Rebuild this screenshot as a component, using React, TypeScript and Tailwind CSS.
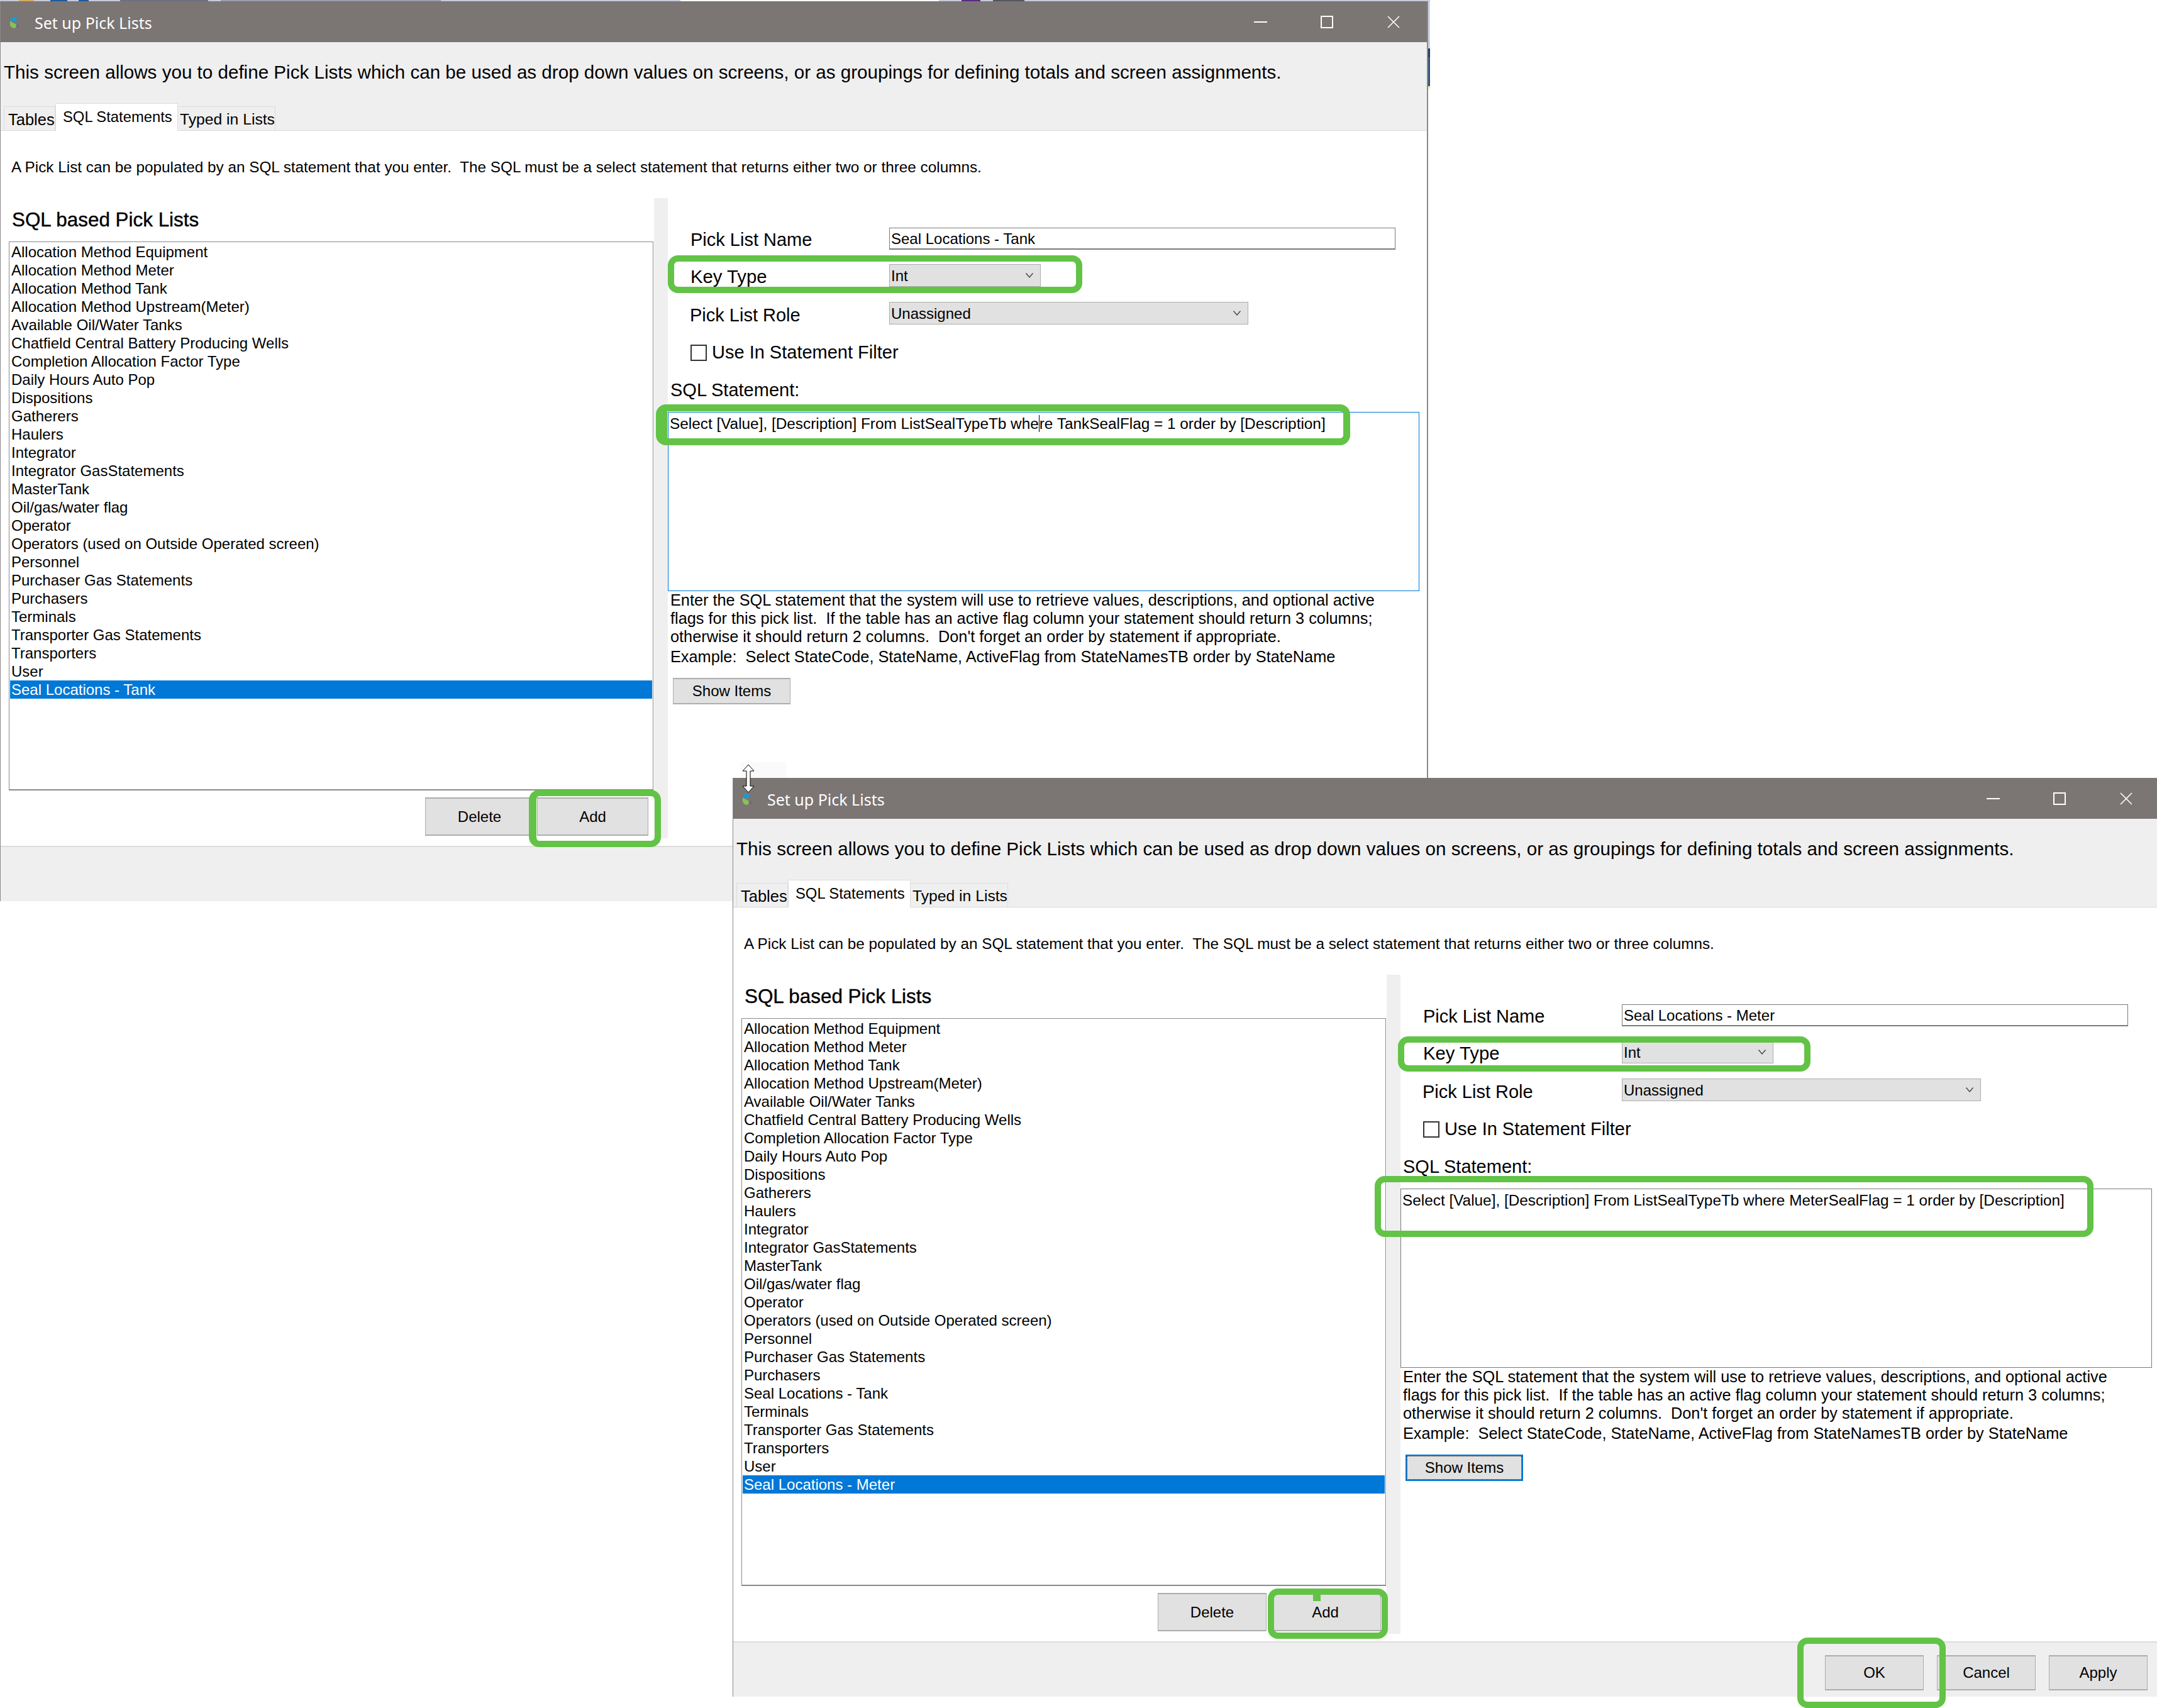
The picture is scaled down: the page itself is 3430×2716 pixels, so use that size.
import type { ReactNode } from 'react';

const baseItems = [
  'Allocation Method Equipment',
  'Allocation Method Meter',
  'Allocation Method Tank',
  'Allocation Method Upstream(Meter)',
  'Available Oil/Water Tanks',
  'Chatfield Central Battery Producing Wells',
  'Completion Allocation Factor Type',
  'Daily Hours Auto Pop',
  'Dispositions',
  'Gatherers',
  'Haulers',
  'Integrator',
  'Integrator GasStatements',
  'MasterTank',
  'Oil/gas/water flag',
  'Operator',
  'Operators (used on Outside Operated screen)',
  'Personnel',
  'Purchaser Gas Statements',
  'Purchasers',
];

const tailItems = ['Terminals', 'Transporter Gas Statements', 'Transporters', 'User'];

function Chevron() {
  return (
    <svg className="w-[14px] h-[10px]" viewBox="0 0 14 10" fill="none" stroke="#444" strokeWidth={1.4}>
      <path d="M1.5 1.5 7 8l5.5-6.5" />
    </svg>
  );
}

function WinButton({ className, children }: { className: string; children: ReactNode }) {
  return (
    <div className={`flex items-center justify-center bg-[#e1e1e1] border border-y-2 border-[#adadad] text-[24px] text-black ${className}`}>
      {children}
    </div>
  );
}

function Dropdown({ className, label }: { className: string; label: string }) {
  return (
    <div className={`flex items-center justify-between bg-[#e1e1e1] border border-[#adadad] pl-[2px] pr-[10px] text-[24px] ${className}`}>
      <span className="pt-[2px]">{label}</span>
      <Chevron />
    </div>
  );
}

function TitleBar() {
  return (
    <div className="flex items-center justify-between h-[65px] bg-[#7b7574] text-white shrink-0">
      <div className="flex items-center pt-[5px]">
        {/* app icon */}
        <svg className="ml-[13px] w-[18px] h-[22px]" viewBox="0 0 18 22">
          <ellipse cx="8" cy="5" rx="5.5" ry="3.5" fill="#1a9ad6" />
          <path d="M2 7c3 3 8 4 10 6 1 3-1 6-4 6-3-1-6-3-6-6z" fill="#8cc152" />
          <circle cx="14" cy="15" r="2.5" fill="#6f6a78" />
        </svg>
        <span className="ml-[23px] font-['Noto_Sans'] text-[25px]">Set up Pick Lists</span>
      </div>
      <div className="flex items-center">
        <div className="flex items-center justify-center w-[105px]">
          <div className="w-[21px] h-[2px] bg-white" />
        </div>
        <div className="flex items-center justify-center w-[105px]">
          <div className="w-[20px] h-[20px] border-2 border-white" />
        </div>
        <div className="flex items-center justify-center w-[107px]">
          <svg className="w-[20px] h-[20px]" viewBox="0 0 20 20" stroke="white" strokeWidth={1.6}>
            <path d="M1 1l18 18M19 1 1 19" />
          </svg>
        </div>
      </div>
    </div>
  );
}

type WindowProps = {
  className: string;
  listClass: string;
  items: string[];
  selected: string;
  sql: ReactNode;
  sqlFocused: boolean;
  showItemsFocused: boolean;
};

function PickListWindow({ className, listClass, items, selected, sql, sqlFocused, showItemsFocused }: WindowProps) {
  return (
    <div className={`absolute w-[2271px] flex flex-col bg-white border-l border-r-2 border-[#8c8888] font-['Liberation_Sans',sans-serif] text-black ${className}`}>
      <TitleBar />

      {/* Header text */}
      <div className="flex items-center h-[96px] bg-[#efefef] pl-[5px] pt-[1px] text-[29.6px] whitespace-pre">
        This screen allows you to define Pick Lists which can be used as drop down values on screens, or as groupings for defining totals and screen assignments.
      </div>

      {/* Tabs */}
      <div className="flex items-end h-[45px] bg-[#efefef] pl-[5px] border-b border-[#d9d9d9] whitespace-nowrap">
        <div className="flex items-center h-[38px] w-[82px] pl-[6px] pt-[3px] border border-b-0 border-[#dcdcdc] text-[25.5px]">Tables</div>
        <div className="flex items-start h-[44px] w-[195px] -mb-px pl-[11px] pt-[3px] bg-white border border-b-0 border-[#dcdcdc] text-[23.8px]">SQL Statements</div>
        <div className="flex items-center h-[38px] w-[155px] pl-[3px] pt-[2px] border border-l-0 border-b-0 border-[#dcdcdc] text-[24.7px]">Typed in Lists</div>
      </div>

      {/* Description */}
      <div className="h-[107px] pl-[17px] pt-[43px] text-[24.3px] leading-[29px] whitespace-pre">
        A Pick List can be populated by an SQL statement that you enter.  The SQL must be a select statement that returns either two or three columns.
      </div>

      <div className="flex">
        {/* Left panel */}
        <div className="w-[1039px] pb-[4px]">
          <div className="flex items-center h-[69px] pl-[18px] text-[31.4px] [-webkit-text-stroke:0.4px_black]">SQL based Pick Lists</div>
          <div className={`ml-[13px] w-[1025px] border border-[#8a8a8a] border-b-2 px-px pt-px text-[24px] ${listClass}`}>
            {items.map((item) => (
              <div
                key={item}
                className={`h-[29px] leading-[29px] pl-[2px] ${item === selected ? 'bg-[#0078d7] text-white' : ''}`}
              >
                {item}
              </div>
            ))}
          </div>
          <div className="flex justify-end gap-[5px] mt-[11px] pr-[9px]">
            <WinButton className="w-[173px] h-[61px]">Delete</WinButton>
            <WinButton className="w-[177px] h-[61px]">Add</WinButton>
          </div>
        </div>

        {/* Splitter */}
        <div className="w-[22px] bg-[#efefef]" />

        {/* Right panel */}
        <div className="flex-1 text-[24px]">
          <div className="flex items-center h-[35px] mt-[47px] pl-[36px]">
            <span className="w-[316px] text-[29px] pt-[4px]">Pick List Name</span>
            <div className="flex items-center w-[805px] h-[35px] border border-[#7a7a7a] border-b-2 pl-[2px] pt-[1px]">{selected}</div>
          </div>
          <div className="flex items-center h-[36px] mt-[23px] pl-[36px]">
            <span className="w-[316px] text-[29.3px] pt-[4px]">Key Type</span>
            <Dropdown className="w-[241px] h-[36px]" label="Int" />
          </div>
          <div className="flex items-center h-[36px] mt-[24px] pl-[35px]">
            <span className="w-[317px] text-[29px] pt-[8px]">Pick List Role</span>
            <Dropdown className="w-[571px] h-[36px]" label="Unassigned" />
          </div>
          <div className="flex items-center h-[26px] mt-[32px] pl-[36px] text-[29px]">
            <div className="w-[26px] h-[26px] border-2 border-[#333] mr-[8px]" />
            Use In Statement Filter
          </div>
          <div className="h-[34px] mt-[29px] pl-[4px] text-[29px] leading-[34px]">SQL Statement:</div>
          <div className={`w-[1195px] h-[285px] mt-[18px] pl-[2px] pt-[3px] text-[24.35px] leading-[29px] border whitespace-pre ${sqlFocused ? 'border-[#0078d7]' : 'border-[#7a7a7a]'}`}>
            {sql}
          </div>
          <div className="pl-[4px] text-[25.3px] leading-[29px] whitespace-pre">
            <div>Enter the SQL statement that the system will use to retrieve values, descriptions, and optional active</div>
            <div>flags for this pick list.  If the table has an active flag column your statement should return 3 columns;</div>
            <div>otherwise it should return 2 columns.  Don't forget an order by statement if appropriate.</div>
            <div className="mt-[3px]">Example:  Select StateCode, StateName, ActiveFlag from StateNamesTB order by StateName</div>
          </div>
          {showItemsFocused ? (
            <div className="w-[187px] h-[42px] mt-[19px] ml-[8px] border-2 border-[#0078d7] bg-[#e1e1e1]">
              <div className="flex items-center justify-center h-full border border-dotted border-black">Show Items</div>
            </div>
          ) : (
            <WinButton className="w-[187px] h-[42px] mt-[19px] ml-[8px]">Show Items</WinButton>
          )}
        </div>
      </div>

      {/* Bottom band */}
      <div className="flex justify-end gap-[21px] h-[88px] mt-[12px] pt-[20px] pr-[19px] bg-[#efefef] border-t-2 border-[#dcdcdc]">
        <WinButton className="w-[157px] h-[56px]">OK</WinButton>
        <WinButton className="w-[157px] h-[56px]">Cancel</WinButton>
        <WinButton className="w-[157px] h-[56px]">Apply</WinButton>
      </div>
    </div>
  );
}

export default function App() {
  return (
    <div className="relative w-[3430px] h-[2716px] overflow-hidden bg-white">
      {/* Desktop peeking above the first window */}
      <div className="absolute left-0 top-0 flex w-[2274px] h-[2px] bg-[#c6cadb]">
        <div className="ml-[30px] w-[24px] bg-[#d9a860]" />
        <div className="ml-[26px] w-[27px] bg-[#1f5a9c]" />
        <div className="ml-[18px] w-[16px] bg-[#1f5a9c]" />
        <div className="ml-[50px] w-[140px] bg-[#6d6f7c]" />
        <div className="ml-[20px] w-[350px] bg-[#9a9cab]" />
        <div className="ml-[381px] w-[411px] bg-white" />
        <div className="ml-[36px] w-[30px] bg-[#5a2a80]" />
        <div className="ml-[20px] w-[50px] bg-[#555560]" />
      </div>
      <div className="absolute left-[2271px] top-[2px] flex flex-col w-[3px] h-[139px]">
        <div className="h-[75px] bg-[#cdd3e3]" />
        <div className="h-[14px] bg-[#2a3a5e]" />
        <div className="h-[46px] bg-[#33557f]" />
        <div className="h-[4px] bg-[#f5ec9a]" />
      </div>

      <PickListWindow
        className="left-0 top-[2px]"
        listClass="h-[873px]"
        items={[...baseItems, ...tailItems, 'Seal Locations - Tank']}
        selected="Seal Locations - Tank"
        sql={
          <>
            Select [Value], [Description] From ListSealTypeTb whe
            <span className="border-l border-black">re TankSealFlag = 1 order by [Description]</span>
          </>
        }
        sqlFocused
        showItemsFocused={false}
      />

      {/* Ghost left behind by the drag cursor */}
      <div className="absolute left-[1178px] top-[1212px] w-[72px] h-[26px] bg-[#fafafa]" />

      <PickListWindow
        className="left-[1165px] top-[1237px]"
        listClass="h-[903px]"
        items={[...baseItems, 'Seal Locations - Tank', ...tailItems, 'Seal Locations - Meter']}
        selected="Seal Locations - Meter"
        sql="Select [Value], [Description] From ListSealTypeTb where MeterSealFlag = 1 order by [Description]"
        sqlFocused={false}
        showItemsFocused
      />

      {/* Resize cursor */}
      <svg className="absolute left-[1180px] top-[1215px] w-[20px] h-[46px]" viewBox="0 0 20 46" fill="white" stroke="black" strokeWidth={1}>
        <path d="M10 1 19 11H13V35H19L10 45 1 35H7V11H1Z" />
      </svg>

      {/* Green annotation boxes */}
      <div className="absolute left-[1062px] top-[406px] w-[659px] h-[60px] border-[10px] border-[#62c346] rounded-[16px]" />
      <div className="absolute left-[1043px] top-[643px] w-[1104px] h-[65px] border-[11px] border-l-[18px] border-[#62c346] rounded-[16px]" />
      <div className="absolute left-[841px] top-[1256px] w-[210px] h-[91px] border-[10px] border-l-[12px] border-[#62c346] rounded-[16px]" />
      <div className="absolute left-[2223px] top-[1648px] w-[656px] h-[56px] border-[10px] border-[#62c346] rounded-[16px]" />
      <div className="absolute left-[2186px] top-[1870px] w-[1143px] h-[97px] border-[10px] border-[#62c346] rounded-[16px]" />
      <div className="absolute left-[2016px] top-[2526px] w-[191px] h-[80px] border-[10px] border-[#62c346] rounded-[16px]" />
      <div className="absolute left-[2088px] top-[2536px] w-[12px] h-[10px] bg-[#62c346]" />
      <div className="absolute left-[2858px] top-[2604px] w-[236px] h-[112px] border-[10px] border-[#62c346] rounded-[16px]" />
    </div>
  );
}
